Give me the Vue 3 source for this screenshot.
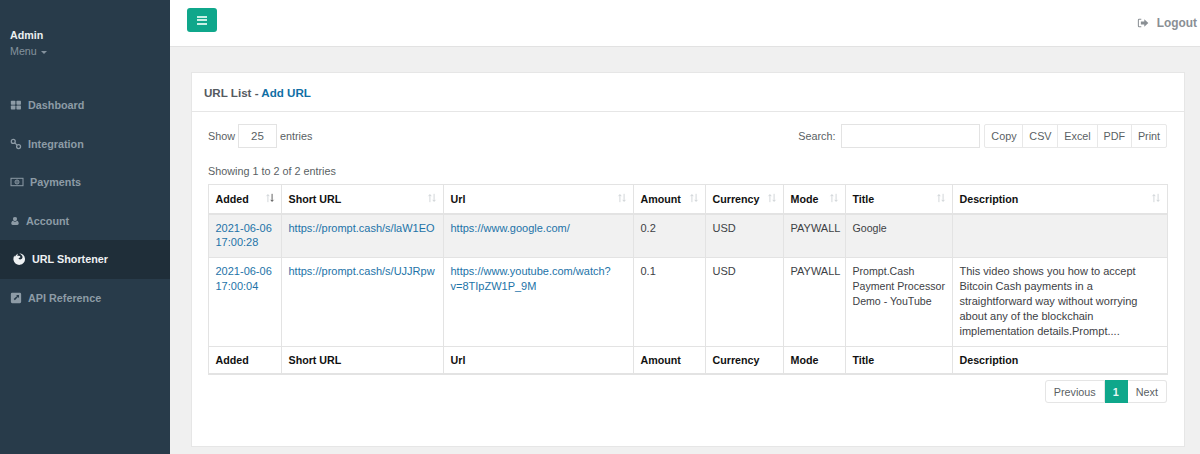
<script setup>
const nav = [
  { label: 'Dashboard', icon: 'dash', gap: 'g1' },
  { label: 'Integration', icon: 'link', gap: 'g1' },
  { label: 'Payments', icon: 'money', gap: 'g2' },
  { label: 'Account', icon: 'user', gap: 'g3' },
  { label: 'URL Shortener', icon: 'fox', gap: 'g4', active: true },
  { label: 'API Reference', icon: 'ext', gap: 'g5' }
]
const cols = [
  ['Added', 73], ['Short URL', 162], ['Url', 190], ['Amount', 72], ['Currency', 78], ['Mode', 62], ['Title', 107], ['Description', 215]
]
const rows = [
  { added: ['2021-06-06', '17:00:28'], short: 'https://prompt.cash/s/laW1EO', url: ['https://www.google.com/'], amount: '0.2', cur: 'USD', mode: 'PAYWALL', title: ['Google'], desc: '', odd: true },
  { added: ['2021-06-06', '17:00:04'], short: 'https://prompt.cash/s/UJJRpw', url: ['https://www.youtube.com/watch?', 'v=8TIpZW1P_9M'], amount: '0.1', cur: 'USD', mode: 'PAYWALL', title: ['Prompt.Cash', 'Payment Processor', 'Demo - YouTube'], desc: 'This video shows you how to accept Bitcoin Cash payments in a straightforward way without worrying about any of the blockchain implementation details.Prompt....' }
]
const buttons = ['Copy', 'CSV', 'Excel', 'PDF', 'Print']
</script>

<template>
  <div class="app">
    <aside class="side">
      <div class="profile">
        <div class="name">Admin</div>
        <div class="menu">Menu <span class="caret"></span></div>
      </div>
      <nav class="nav">
        <a v-for="n in nav" :key="n.label" class="item" :class="[n.gap, { active: n.active }]">
          <svg class="ico" viewBox="0 0 14 14">
            <g v-if="n.icon === 'dash'" fill="currentColor">
              <rect x="1" y="2" width="5.3" height="4.6" rx=".8" /><rect x="7.5" y="2" width="5.3" height="4.6" rx=".8" />
              <rect x="1" y="7.6" width="5.3" height="4.6" rx=".8" /><rect x="7.5" y="7.6" width="5.3" height="4.6" rx=".8" />
            </g>
            <g v-else-if="n.icon === 'link'" fill="none" stroke="currentColor" stroke-width="1.5">
              <circle cx="3.8" cy="4" r="2.3" /><circle cx="10" cy="10" r="2.3" /><path d="M5.5 5.700 8.300 8.300" />
            </g>
            <g v-else-if="n.icon === 'money'">
              <rect x="1" y="3.300" width="12" height="7.400" fill="none" stroke="currentColor" stroke-width="1" />
              <circle cx="7" cy="7" r="2" fill="none" stroke="currentColor" stroke-width="1" />
              <path d="M7 5.800v2.400" stroke="currentColor" stroke-width="1" />
            </g>
            <path v-else-if="n.icon === 'user'" fill="currentColor" d="M7 1.500a2.800 2.800 0 0 1 2.700 3.300C9.400 6.200 8.400 7 7 7S4.600 6.200 4.300 4.800A2.800 2.800 0 0 1 7 1.500ZM4.300 6.800C5 7.600 6 8 7 8s2-.4 2.700-1.200c1.700.4 2.500 1.700 2.500 3.700 0 1.200-.8 2-1.900 2H3.700c-1.100 0-1.900-.8-1.900-2 0-2 .8-3.300 2.500-3.700Z" />
            <path v-else-if="n.icon === 'fox'" fill="currentColor" fill-rule="evenodd" d="M7.200 1.300a5.800 5.800 0 1 1-5.700 6.800c-.3-1.700.1-3.200.9-4.500l.5 1.300C3.500 3.700 4.500 2.300 6 1.800c-.5.800-.7 1.500-.5 2.200.6-.3 1.400-.3 2.100 0 .9.400 1 1.200.5 1.600l-1.300.5c-.3.500 0 1 .6 1.200 1.300.3 2.600-.3 3-1.500.3-1 0-2-.9-2.900-.7-.7-1.700-1.200-2.300-1.600Z" />
            <path v-else fill="currentColor" fill-rule="evenodd" d="M2.500 1h9A1.500 1.500 0 0 1 13 2.500v9a1.500 1.500 0 0 1-1.500 1.500h-9A1.500 1.500 0 0 1 1 11.500v-9A1.500 1.500 0 0 1 2.500 1ZM7 3.500l1.300 1.300-4 3.500 1.400 1.400 3.500-4L10.500 7V3.500H7Z" />
          </svg>
          <span>{{ n.label }}</span>
        </a>
      </nav>
    </aside>

    <div class="main">
      <header class="top">
        <button class="burger" aria-label="Toggle menu">
          <span></span><span></span><span></span>
        </button>
        <a class="logout">
          <svg viewBox="0 0 14 14" width="12" height="12" fill="currentColor">
            <path d="M5 2H2.500A1.500 1.500 0 0 0 1 3.500v7A1.500 1.500 0 0 0 2.500 12H5v-1.200H2.500a.3.300 0 0 1-.3-.3v-7c0-.2.100-.3.3-.3H5Z" />
            <path d="M8.500 2.700 13.200 7l-4.700 4.300V8.800H4.500V5.200h4Z" />
          </svg>
          <span>Logout</span>
        </a>
      </header>

      <section class="card">
        <h2 class="card-title">URL List - <a class="add">Add URL</a></h2>
        <div class="card-body">
          <div class="controls">
            <div class="length">
              <span>Show</span>
              <span class="select">25</span>
              <span>entries</span>
            </div>
            <div class="right">
              <label class="search">Search: <span class="field"></span></label>
              <div class="btns"><span v-for="b in buttons" :key="b" class="btn">{{ b }}</span></div>
            </div>
          </div>
          <div class="info">Showing 1 to 2 of 2 entries</div>
          <table class="tbl">
            <colgroup><col v-for="c in cols" :key="c[0]" :style="{ width: c[1] + 'px' }" /></colgroup>
            <thead>
              <tr>
                <th v-for="(c, i) in cols" :key="c[0]">
                  <div class="th">
                    <span>{{ c[0] }}</span>
                    <svg class="sort" :class="{ sorted: i === 0 }" viewBox="0 0 12 12" width="10" height="10" fill="none" stroke-width="1">
                      <path class="up" d="M3.500 11V2M1.800 3.800 3.500 2l1.700 1.800" />
                      <path class="down" d="M8.500 1v9M6.800 8.200 8.500 10l1.700-1.800" />
                    </svg>
                  </div>
                </th>
              </tr>
            </thead>
            <tbody>
              <tr v-for="r in rows" :key="r.short" :class="{ odd: r.odd }">
                <td><a v-for="l in r.added" :key="l" class="lnk block">{{ l }}</a></td>
                <td><a class="lnk">{{ r.short }}</a></td>
                <td><a v-for="l in r.url" :key="l" class="lnk block">{{ l }}</a></td>
                <td>{{ r.amount }}</td>
                <td>{{ r.cur }}</td>
                <td>{{ r.mode }}</td>
                <td><span v-for="l in r.title" :key="l" class="block tight">{{ l }}</span></td>
                <td>{{ r.desc }}</td>
              </tr>
            </tbody>
            <tfoot>
              <tr><th v-for="c in cols" :key="c[0]">{{ c[0] }}</th></tr>
            </tfoot>
          </table>
          <div class="pager">
            <span class="pg first">Previous</span>
            <span class="pg cur">1</span>
            <span class="pg last">Next</span>
          </div>
        </div>
      </section>
    </div>
  </div>
</template>

<style>
html, body { margin: 0; background: #f0f0f0; }
</style>

<style scoped>
.app {
  display: flex;
  width: 1200px;
  height: 454px;
  overflow: hidden;
  font-family: "Liberation Sans", Arial, sans-serif;
  font-size: 10.8px;
  color: #5a5f64;
  background: #f0f0f0;
}
.side {
  flex: 0 0 170px;
  background: #283b4a;
  box-sizing: border-box;
  width: 170px;
}
.profile { padding: 27px 0 0 10px; height: 85px; box-sizing: border-box; }
.name { color: #ecf0f1; font-weight: 700; font-size: 10.7px; line-height: 16px; }
.menu { color: #84929d; font-size: 10.7px; line-height: 16px; }
.caret {
  display: inline-block;
  border-top: 3px solid #84929d;
  border-left: 3px solid transparent;
  border-right: 3px solid transparent;
  vertical-align: middle;
  margin-left: 1px;
}
.nav { display: flex; flex-direction: column; padding-top: 1px; }
.item {
  display: flex;
  align-items: center;
  height: 38.5px;
  padding-left: 10px;
  color: #8d9ba6;
  font-weight: 700;
  font-size: 10.8px;
}
.ico { flex: none; width: 12px; height: 12px; }
.g1 .ico { margin-right: 6px; }
.g2 .ico { width: 14px; height: 14px; margin-right: 6px; }
.g3 .ico { width: 10px; margin-right: 6px; }
.g4 .ico { width: 14px; height: 14px; margin: 0 6px 0 2px; }
.g5 .ico { margin-right: 6px; }
.item.active { background: #1f2e39; color: #eef1f3; }

.main { flex: 1; min-width: 0; }
.top {
  height: 47px;
  box-sizing: border-box;
  background: #fff;
  border-bottom: 1px solid #e2e2e2;
  display: flex;
  justify-content: space-between;
  padding: 8px 3px 0 17px;
}
.burger {
  width: 30px;
  height: 24px;
  border: 0;
  border-radius: 3px;
  background: #0fa78b;
  display: flex;
  flex-direction: column;
  gap: 1.5px;
  align-items: center;
  justify-content: center;
  padding: 0;
}
.burger span { display: block; width: 10px; height: 2px; background: #c9f0e5; }
.logout {
  display: flex;
  align-items: center;
  align-self: flex-start;
  height: 29px;
  gap: 8px;
  color: #8a8f94;
  font-weight: 700;
  font-size: 11.9px;
}
.card {
  margin: 25px 15px 0 21px;
  height: 375px;
  box-sizing: border-box;
  background: #fff;
  border: 1px solid #e6e6e6;
}
.card-title {
  margin: 0;
  height: 39px;
  box-sizing: border-box;
  padding: 13px 12px 0;
  font-size: 11.6px;
  line-height: 14px;
  font-weight: 700;
  color: #555a5f;
  border-bottom: 1px solid #e6e6e6;
}
.add { color: #106fa5; }
.card-body { padding: 12px 17px 0 16px; }
.controls { display: flex; justify-content: space-between; align-items: flex-start; height: 24px; }
.length, .search, .right { display: flex; align-items: center; height: 24px; }
.length { gap: 3px; }
.select {
  width: 39px;
  height: 24px;
  box-sizing: border-box;
  border: 1px solid #e3e3e3;
  display: flex;
  align-items: center;
  justify-content: center;
  font-size: 11.5px;
}
.search { gap: 6px; margin-right: 4px; }
.field { display: block; width: 139px; height: 24px; box-sizing: border-box; border: 1px solid #e3e3e3; }
.btns { display: flex; border: 1px solid #e8e8e8; border-radius: 2px; height: 24px; box-sizing: border-box; }
.btn { display: flex; align-items: center; padding: 0 5.9px; border-left: 1px solid #e8e8e8; }
.btn:first-child { border-left: 0; }
.info { margin-top: 16px; line-height: 14px; height: 20px; }
.tbl {
  border-collapse: collapse;
  table-layout: fixed;
  width: 959px;
  color: #3d4145;
  font-size: 11px;
  line-height: 14.9px;
  border: 1px solid #e3e3e3;
}
th, td { border: 1px solid #e3e3e3; text-align: left; vertical-align: top; }
td { padding: 6px 4px 7px 6.5px; }
th { color: #111; font-weight: 700; font-size: 10.7px; }
thead th { height: 29px; box-sizing: border-box; padding: 1px 6.5px 0; vertical-align: middle; border-bottom-width: 2px; }
tfoot th { height: 28px; box-sizing: border-box; padding: 1px 6.5px 0; vertical-align: middle; border-bottom-width: 2px; }
.odd td { background: #f1f1f1; }
.th { display: flex; justify-content: space-between; align-items: center; }
.sort { flex: none; margin-top: -3px; }
.sort .up, .sort .down { stroke: #c9ced1; }
.sort.sorted .down { stroke: #444; }
.lnk { color: #1d73a8; }
.block { display: block; }
.tight { white-space: nowrap; font-size: 10.6px; }
.pager { display: flex; justify-content: flex-end; margin-top: 5px; height: 23px; }
.pg { display: flex; align-items: center; padding: 0 8px; border: 1px solid #e5e5e5; border-left: 0; }
.first { border-left: 1px solid #e5e5e5; border-radius: 3px 0 0 3px; }
.last { border-radius: 0 3px 3px 0; }
.cur { background: #0fa78b; border-color: #0fa78b; color: #e8f7f3; font-weight: 700; padding: 0 8px; }
</style>
